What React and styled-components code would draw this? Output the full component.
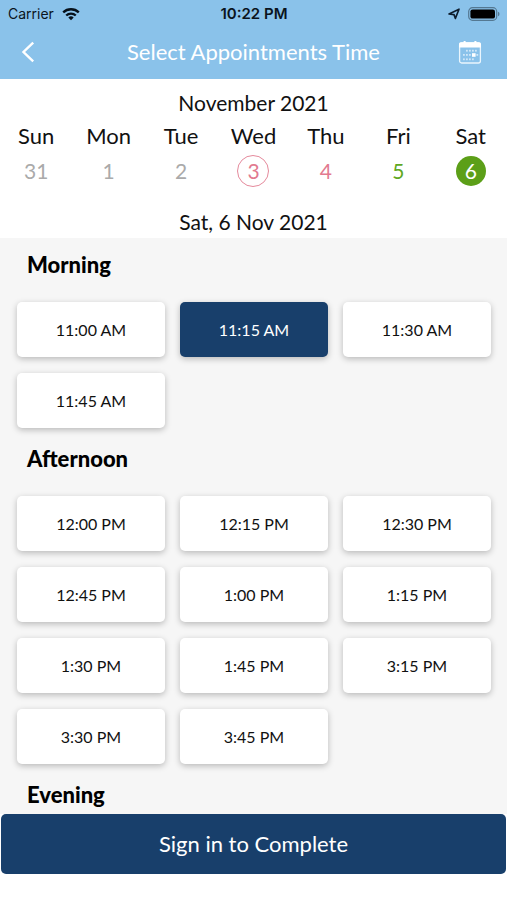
import React, { useState } from "react";
import styled, { createGlobalStyle } from "styled-components";

const GlobalStyle = createGlobalStyle`
  * { box-sizing: border-box; }
  body { margin: 0; background: #fff; }
  button { font: inherit; color: inherit; border: 0; padding: 0; background: none; cursor: pointer; }
`;

const Screen = styled.div`
  height: 100vh;
  display: flex;
  flex-direction: column;
  background: #fff;
  color: #111;
  font-family: Lato, "Open Sans", sans-serif;
`;

const TopArea = styled.header`
  background: #8ac2ea;
  flex: none;
`;

const StatusBar = styled.div`
  height: 28px;
  padding: 0 7px 0 8px;
  display: grid;
  grid-template-columns: 1fr auto 1fr;
  align-items: center;
  color: #0a1420;
  font: 400 14px/28px Inter, Roboto, sans-serif;
`;

const StatusGroup = styled.div`
  display: flex;
  align-items: center;
  gap: 8px;
  justify-content: ${(p) => (p.$end ? "flex-end" : "flex-start")};
`;

const Clock = styled.span`
  font-size: 15px;
  font-weight: 600;
`;

const NavBar = styled.div`
  height: 51px;
  padding: 0 17px 4px;
  display: flex;
  align-items: center;
  justify-content: space-between;
`;

const NavButton = styled.button`
  width: 40px;
  height: 40px;
  display: flex;
  align-items: center;
  justify-content: ${(p) => (p.$end ? "center" : "flex-start")};
`;

const Title = styled.h1`
  margin: 0;
  color: #fff;
  font-size: 22px;
  line-height: 32px;
  font-weight: 400;
`;

const Calendar = styled.section`
  flex: none;
  padding-top: 8px;
  text-align: center;
`;

const Caption = styled.h2`
  margin: 0;
  font-size: 21px;
  line-height: 32px;
  font-weight: 400;
`;

const Week = styled.div`
  display: grid;
  grid-template-columns: repeat(7, 1fr);
  justify-items: center;
  margin-bottom: 19px;
`;

const Weekday = styled.span`
  font-size: 22px;
  line-height: 34px;
`;

const dayColors = { past: "#aaa", full: "#e27a90", open: "#5fa823" };

const Day = styled.button`
  && {
    width: 32px;
    height: 32px;
    margin-top: 2px;
    border-radius: 50%;
    font-size: 21px;
    line-height: 28px;
    border: 1px solid ${(p) => (p.$today ? "#e58a9c" : "transparent")};
    color: ${(p) => (p.$selected ? "#fff" : dayColors[p.$kind])};
    background: ${(p) => (p.$selected ? "#5c9f18" : "transparent")};
    background-clip: padding-box;
  }
`;

const SlotList = styled.main`
  flex: 1;
  min-height: 0;
  overflow-y: auto;
  scrollbar-width: none;
  background: #f6f6f6;
  display: flex;
  flex-direction: column;
  gap: 4px;
`;

const Period = styled.section`
  flex: none;
  padding: 0 16px 0 17px;
`;

const PeriodTitle = styled.h3`
  margin: 0 0 10px;
  padding-left: 10px;
  color: #000;
  font-size: 22px;
  line-height: 54px;
  font-weight: 900;
`;

const Slots = styled.div`
  display: grid;
  grid-template-columns: repeat(3, 1fr);
  gap: 16px 15px;
`;

const Slot = styled.button`
  && {
    height: 55px;
    border-radius: 5px;
    font-size: 16px;
    color: ${(p) => (p.$selected ? "#fff" : "#111")};
    background: ${(p) => (p.$selected ? "#183f6b" : "#fff")};
    box-shadow: 0 2px 6px rgba(0, 0, 0, 0.25);
  }
`;

const Footer = styled.footer`
  flex: none;
  padding: 0 1px 26px;
  display: flex;
`;

const SubmitButton = styled.button`
  && {
    flex: 1;
    height: 60px;
    padding-bottom: 2px;
    border-radius: 5px;
    background: #183f6b;
    color: #fff;
    font-size: 22px;
  }
`;

const days = [
  { name: "Sun", date: 31, kind: "past" },
  { name: "Mon", date: 1, kind: "past" },
  { name: "Tue", date: 2, kind: "past" },
  { name: "Wed", date: 3, kind: "full", today: true },
  { name: "Thu", date: 4, kind: "full" },
  { name: "Fri", date: 5, kind: "open" },
  { name: "Sat", date: 6, kind: "open" },
];

const periods = [
  { name: "Morning", slots: ["11:00 AM", "11:15 AM", "11:30 AM", "11:45 AM"] },
  {
    name: "Afternoon",
    slots: [
      "12:00 PM", "12:15 PM", "12:30 PM", "12:45 PM", "1:00 PM", "1:15 PM",
      "1:30 PM", "1:45 PM", "3:15 PM", "3:30 PM", "3:45 PM",
    ],
  },
  { name: "Evening", slots: [] },
];

const WifiIcon = () => (
  <svg width="18" height="13" viewBox="0 0 18 13" fill="none" stroke="#06101a" strokeWidth="2.3">
    <path d="M1.2 4.4a11.2 11.2 0 0 1 15.6 0" />
    <path d="M4.2 7.5a6.9 6.9 0 0 1 9.6 0" />
    <path d="M9 12.3 6.3 9.6a3.9 3.9 0 0 1 5.4 0Z" fill="#06101a" stroke="none" />
  </svg>
);

const LocationIcon = () => (
  <svg width="12" height="12" viewBox="0 0 12 12" fill="none" stroke="#0c1c2c" strokeWidth="1.6" strokeLinejoin="round">
    <path d="M11 1.2 7.4 10.4 6 6.6 1 6Z" />
  </svg>
);

const BatteryIcon = () => (
  <svg width="32" height="14" viewBox="0 0 32 14">
    <rect x=".7" y=".7" width="28" height="12.6" rx="3.8" fill="none" stroke="#547892" strokeWidth="1.2" />
    <rect x="2.4" y="2.4" width="24.6" height="9.2" rx="2.2" fill="#000" />
    <path d="M30 4.8q1.5.5 1.5 2.2T30 9.2Z" fill="#547892" />
  </svg>
);

const BackIcon = () => (
  <svg width="18" height="22" viewBox="0 0 18 22" fill="none" stroke="#fff" strokeWidth="2.4">
    <path d="M16.2 1.7 6.5 11l9.7 9.3" />
  </svg>
);

const CalendarIcon = () => (
  <svg width="24" height="24" viewBox="0 0 24 24">
    <rect x="1.6" y="3" width="20.8" height="20" rx="2" fill="none" stroke="#e9f5fd" strokeWidth="1.3" />
    <path d="M1 7.6V4.2Q1 2.3 3 2.3h2.6V1h2v1.3h8.8V1h2v1.3H21q2 0 2 1.9v3.4Z" fill="#fff" />
    <g fill="#cfe7f8">
      {[8, 11, 14, 17].map((x) => <rect key={x} x={x} y="9.8" width="1.8" height="1.8" />)}
      {[5, 8, 11, 14, 18.4].map((x) => <rect key={x} x={x} y="14" width="1.8" height="1.8" />)}
      {[5, 8, 11, 14].map((x) => <rect key={x} x={x} y="18.4" width="1.8" height="1.8" />)}
    </g>
    <rect x="14" y="13.2" width="3.6" height="3.6" fill="#fff" />
  </svg>
);

export default function App() {
  const [date, setDate] = useState(6);
  const [time, setTime] = useState("11:15 AM");
  const weekday = days.find((d) => d.date === date).name;
  const month = date === 31 ? "Oct" : "Nov";

  return (
    <Screen>
      <GlobalStyle />
      <TopArea>
        <StatusBar>
          <StatusGroup>
            <span>Carrier</span>
            <WifiIcon />
          </StatusGroup>
          <Clock>10:22 PM</Clock>
          <StatusGroup $end>
            <LocationIcon />
            <BatteryIcon />
          </StatusGroup>
        </StatusBar>
        <NavBar>
          <NavButton aria-label="Back"><BackIcon /></NavButton>
          <Title>Select Appointments Time</Title>
          <NavButton $end aria-label="Open calendar"><CalendarIcon /></NavButton>
        </NavBar>
      </TopArea>

      <Calendar>
        <Caption>November 2021</Caption>
        <Week>
          {days.map((d) => <Weekday key={d.name}>{d.name}</Weekday>)}
          {days.map((d) => (
            <Day
              key={d.date}
              $kind={d.kind}
              $today={d.today}
              $selected={d.date === date}
              aria-pressed={d.date === date}
              onClick={() => setDate(d.date)}
            >
              {d.date}
            </Day>
          ))}
        </Week>
        <Caption>{weekday}, {date} {month} 2021</Caption>
      </Calendar>

      <SlotList>
        {periods.map((p) => (
          <Period key={p.name}>
            <PeriodTitle>{p.name}</PeriodTitle>
            <Slots>
              {p.slots.map((s) => (
                <Slot key={s} $selected={s === time} aria-pressed={s === time} onClick={() => setTime(s)}>
                  {s}
                </Slot>
              ))}
            </Slots>
          </Period>
        ))}
      </SlotList>

      <Footer>
        <SubmitButton>Sign in to Complete</SubmitButton>
      </Footer>
    </Screen>
  );
}
